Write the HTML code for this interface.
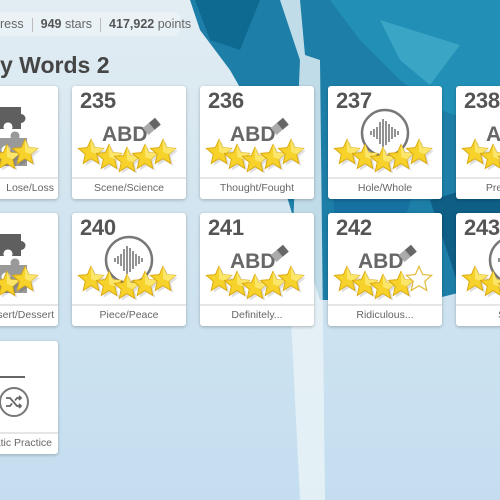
<!DOCTYPE html>
<html><head><meta charset="utf-8"><style>
*{margin:0;padding:0;box-sizing:border-box}
html,body{width:500px;height:500px;overflow:hidden}
body{position:relative;font-family:"Liberation Sans",sans-serif;background:linear-gradient(180deg,#e2edf3 0%,#d3e5f0 40%,#c4def0 100%)}
.wrap{position:absolute;left:0;top:0;width:500px;height:500px;overflow:hidden}
.bg{position:absolute;left:0;top:0}
.card{position:absolute;width:114px;height:113px;background:#fff;border-radius:3px;box-shadow:0 1px 3px rgba(0,0,0,.25);overflow:hidden}
.num{position:absolute;left:8px;top:2px;font-size:22px;font-weight:bold;color:#555;letter-spacing:-0.3px}
.lab{position:absolute;left:0;right:0;top:91px;height:22px;border-top:2px solid #e6e6e6;text-align:center;font-size:10.5px;line-height:19px;color:#666;white-space:nowrap}
.ic{position:absolute;left:0;top:0}
.stats{position:absolute;left:-20px;top:12px;width:200px;height:24px;border-radius:6px;background:rgba(255,255,255,.3);font-size:12.5px;color:#666;line-height:24px;padding-left:20px;white-space:nowrap}
.stats b{color:#555}
.sep{display:inline-block;width:1px;height:14px;background:#bbb;vertical-align:middle;margin:0 8px}
h1{position:absolute;left:0;top:52px;font-size:23px;color:#454545;font-weight:bold;white-space:nowrap}
</style></head><body><div class="wrap">
<svg class="bg" width="500" height="500">
<polygon points="190,0 500,0 500,240 470,290 430,300 400,270 350,300 320,300 300,240 270,140 230,70 200,30" fill="#1d7fa8"/>
<polygon points="330,0 500,0 500,130 440,110 400,80 360,40" fill="#2290b6"/>
<polygon points="195,0 260,0 240,50 210,40" fill="#0f6a92"/>
<polygon points="380,20 460,45 430,85 400,60" fill="#3aa5c4"/>
<polygon points="430,200 500,180 500,260 460,290" fill="#0e5e86"/>
<polygon points="330,160 420,170 380,300 340,280" fill="#1670a0"/>
<polygon points="280,0 300,0 305,55 320,60 325,500 300,500 290,300 300,60" fill="#eaf4f8" opacity=".8"/>
</svg>
<div class="stats">ress<span class="sep"></span><b>949</b> stars<span class="sep"></span><b>417,922</b> points</div>
<h1>y Words 2</h1>

<svg width="0" height="0" style="position:absolute">
<defs>
<g id="s"><g transform="scale(1.15)"><path d="M0,-11 L3.2,-3.8 L11,-3.2 L5,2 L6.8,10 L0,5.8 L-6.8,10 L-5,2 L-11,-3.2 L-3.2,-3.8Z" fill="#000" opacity=".12" transform="translate(2,2)"/><path d="M0,-11 L3.2,-3.8 L11,-3.2 L5,2 L6.8,10 L0,5.8 L-6.8,10 L-5,2 L-11,-3.2 L-3.2,-3.8Z" fill="#f6d22a" stroke="#d9a70f" stroke-width=".8"/><path d="M0,-11 L3.2,-3.8 L11,-3.2 L5,2 L0,0Z" fill="#fbe66a"/></g></g>
<g id="e"><g transform="scale(1.15)"><path d="M0,-11 L3.2,-3.8 L11,-3.2 L5,2 L6.8,10 L0,5.8 L-6.8,10 L-5,2 L-11,-3.2 L-3.2,-3.8Z" fill="#fff" stroke="#e0b832" stroke-width="1"/></g></g>
<g id="abd"><text x="30" y="55" font-family="Liberation Sans" font-weight="bold" font-size="21" fill="#676767">ABD</text><g transform="translate(79,41) rotate(-40)"><rect x="-7" y="-4.5" width="8" height="9" fill="#aaa"/><rect x="1" y="-4.5" width="8" height="9" fill="#666"/></g></g>
<g id="aud"><circle cx="57" cy="47" r="23" fill="none" stroke="#777" stroke-width="2.5"/><g stroke="#777" stroke-width="1.6"><line x1="43" y1="45" x2="43" y2="49"/><line x1="46" y1="43" x2="46" y2="51"/><line x1="49" y1="41" x2="49" y2="53"/><line x1="52" y1="36" x2="52" y2="58"/><line x1="55" y1="33" x2="55" y2="61"/><line x1="58" y1="35" x2="58" y2="59"/><line x1="61" y1="38" x2="61" y2="56"/><line x1="64" y1="41" x2="64" y2="53"/><line x1="67" y1="43" x2="67" y2="51"/><line x1="70" y1="45" x2="70" y2="49"/></g></g>
<g id="st5"><use href="#s" transform="translate(19,66)"/><use href="#s" transform="translate(37,71)"/><use href="#s" transform="translate(55,74)"/><use href="#s" transform="translate(73,71)"/><use href="#s" transform="translate(91,66)"/></g>
<g id="st4"><use href="#s" transform="translate(19,66)"/><use href="#s" transform="translate(37,71)"/><use href="#s" transform="translate(55,74)"/><use href="#s" transform="translate(73,71)"/><use href="#e" transform="translate(91,66)"/></g>
<g id="puz"><path d="M56,21 h21 v7 a4.5,4.5 0 1 1 0,9 v6 h-9 a4.5,4.5 0 1 0 -8,0 h-4z" fill="#5f5f5f"/><path d="M56,52 h11 a4.5,4.5 0 1 1 8,0 h8 v28 h-27z" fill="#999"/><circle cx="62" cy="64" r="4.5" fill="#fff"/></g>
</defs></svg>

<div class="card" style="left:-56px;top:86px"><svg class="ic" width="114" height="113"><use href="#puz"/><g transform="translate(-10,0)"><use href="#st5"/></g></svg><div class="lab" style="text-align:right;padding-right:4px">Lose/Loss</div></div>
<div class="card" style="left:72px;top:86px"><div class="num">235</div><svg class="ic" width="114" height="113"><use href="#abd"/><use href="#st5"/></svg><div class="lab">Scene/Science</div></div>
<div class="card" style="left:200px;top:86px"><div class="num">236</div><svg class="ic" width="114" height="113"><use href="#abd"/><use href="#st5"/></svg><div class="lab">Thought/Fought</div></div>
<div class="card" style="left:328px;top:86px"><div class="num">237</div><svg class="ic" width="114" height="113"><use href="#aud"/><use href="#st5"/></svg><div class="lab">Hole/Whole</div></div>
<div class="card" style="left:456px;top:86px"><div class="num">238</div><svg class="ic" width="114" height="113"><use href="#abd"/><use href="#st5"/></svg><div class="lab">Preparation</div></div>

<div class="card" style="left:-56px;top:213px"><svg class="ic" width="114" height="113"><use href="#puz"/><g transform="translate(-10,0)"><use href="#st5"/></g></svg><div class="lab" style="text-align:right;padding-right:4px">Desert/Dessert</div></div>
<div class="card" style="left:72px;top:213px"><div class="num">240</div><svg class="ic" width="114" height="113"><use href="#aud"/><use href="#st5"/></svg><div class="lab">Piece/Peace</div></div>
<div class="card" style="left:200px;top:213px"><div class="num">241</div><svg class="ic" width="114" height="113"><use href="#abd"/><use href="#st5"/></svg><div class="lab">Definitely...</div></div>
<div class="card" style="left:328px;top:213px"><div class="num">242</div><svg class="ic" width="114" height="113"><use href="#abd"/><use href="#st4"/></svg><div class="lab">Ridiculous...</div></div>
<div class="card" style="left:456px;top:213px"><div class="num">243</div><svg class="ic" width="114" height="113"><use href="#aud"/><use href="#st5"/></svg><div class="lab">Scene</div></div>

<div class="card" style="left:-56px;top:341px"><svg class="ic" width="114" height="113"><line x1="30" y1="36" x2="81" y2="36" stroke="#666" stroke-width="2"/><circle cx="70" cy="61" r="14" fill="none" stroke="#777" stroke-width="2"/><path d="M62,57 h4 l7,8 h4 M62,65 h4 l2,-2.5 M71,59.5 l2,-2.5 h4 M75,55 l2,2 l-2,2 M75,63 l2,2 l-2,2" fill="none" stroke="#666" stroke-width="1.8"/></svg><div class="lab" style="text-align:right;padding-right:6px">Automatic Practice</div></div>
</div></body></html>
